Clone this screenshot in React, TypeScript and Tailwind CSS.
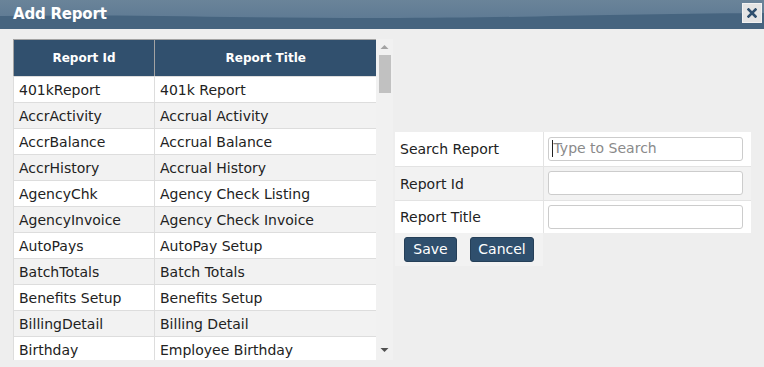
import React from "react";

const rows: [string, string][] = [
  ["401kReport", "401k Report"],
  ["AccrActivity", "Accrual Activity"],
  ["AccrBalance", "Accrual Balance"],
  ["AccrHistory", "Accrual History"],
  ["AgencyChk", "Agency Check Listing"],
  ["AgencyInvoice", "Agency Check Invoice"],
  ["AutoPays", "AutoPay Setup"],
  ["BatchTotals", "Batch Totals"],
  ["Benefits Setup", "Benefits Setup"],
  ["BillingDetail", "Billing Detail"],
  ["Birthday", "Employee Birthday"],
];

export default function App() {
  return (
    <div
      className="w-[764px] h-[367px] bg-[#eeeeee] overflow-hidden text-[#222]"
      style={{ fontFamily: '"DejaVu Sans", Verdana, sans-serif' }}
    >
      {/* Title bar */}
      <div className="relative h-[29px] bg-[#46647f] flex items-center pl-[13px] pr-[2px] overflow-hidden">
        <svg className="absolute inset-0" width="764" height="29" viewBox="0 0 764 29" preserveAspectRatio="none">
          <defs>
            <linearGradient id="tg" x1="0" y1="0" x2="0" y2="1">
              <stop offset="0" stopColor="#6a8499" />
              <stop offset="1" stopColor="#5f7b94" />
            </linearGradient>
          </defs>
          <path d="M0 0 H764 V13 C600 14 520 18 380 18 C240 18 120 14 0 16 Z" fill="url(#tg)" />
        </svg>
        <span className="relative text-white font-bold text-[15px] leading-none tracking-[-0.2px]">Add Report</span>
        <div className="relative ml-auto self-start mt-[3px] w-[20px] h-[20px] bg-[#e4e4e4] border border-[#f2f2f2] flex items-center justify-center">
          <svg width="10" height="10" viewBox="0 0 10 10">
            <path d="M1.5 1.5 L8.5 8.5 M8.5 1.5 L1.5 8.5" stroke="#2f4f6e" strokeWidth="2.6" strokeLinecap="square" />
          </svg>
        </div>
      </div>

      <div className="flex">
        {/* Left list */}
        <div className="ml-[13px] mt-[10px] flex h-[321px]">
          <div className="w-[363px] overflow-hidden">
            <table className="border-collapse w-[363px] table-fixed">
              <colgroup>
                <col className="w-[141px]" />
                <col className="w-[222px]" />
              </colgroup>
              <thead>
                <tr className="h-[37px] bg-[#31506e] text-white text-[12px] font-bold">
                  <th className="border border-[#a3a3a3] border-b-[#ddd] font-bold">Report Id</th>
                  <th className="border border-[#a3a3a3] border-b-[#ddd] border-r-0 font-bold">Report Title</th>
                </tr>
              </thead>
              <tbody>
                {rows.map(([id, title], i) => (
                  <tr key={id} className={`h-[26px] text-[14px] ${i % 2 === 0 ? "bg-white" : "bg-[#f2f2f2]"}`}>
                    <td className="border border-[#dddddd] pl-[5px] pt-[1px] whitespace-nowrap">{id}</td>
                    <td className="border border-[#dddddd] border-r-0 pl-[5px] pt-[1px] whitespace-nowrap">{title}</td>
                  </tr>
                ))}
              </tbody>
            </table>
          </div>
          {/* scrollbar */}
          <div className="w-[17px] bg-[#f1f1f1] flex flex-col items-center">
            <svg className="mt-[5px]" width="9" height="6" viewBox="0 0 9 6">
              <path d="M0.5 5 L4.5 1 L8.5 5 Z" fill="#a3a3a3" />
            </svg>
            <div className="mt-[5px] w-[12px] h-[38px] bg-[#c1c1c1]" />
            <svg className="mt-auto mb-[7px]" width="9" height="6" viewBox="0 0 9 6">
              <path d="M0.5 1 L4.5 5 L8.5 1 Z" fill="#505050" />
            </svg>
          </div>
        </div>

        {/* Right form */}
        <div className="ml-[2px] mt-[103px] w-[356px]">
          <table className="border-collapse w-[356px] table-fixed text-[14px]">
            <colgroup>
              <col className="w-[148px]" />
              <col className="w-[208px]" />
            </colgroup>
            <tbody>
              <tr className="h-[34px] bg-white">
                <td className="border-r border-b border-[#e3e3e3] pl-[5px] pt-[2px]">Search Report</td>
                <td className="border-b border-[#e3e3e3] pl-[4px]">
                  <div className="w-[195px] h-[24px] border border-[#cccccc] rounded-[3px] bg-white flex items-center pl-[3px] text-[#8a8a8a]">
                    <span className="w-px h-[17px] bg-[#222] mr-[1px]" />
                    Type to Search
                  </div>
                </td>
              </tr>
              <tr className="h-[34px] bg-[#f2f2f2]">
                <td className="border-r border-b border-[#e3e3e3] pl-[5px] pt-[2px]">Report Id</td>
                <td className="border-b border-[#e3e3e3] pl-[4px]">
                  <div className="w-[195px] h-[24px] border border-[#cccccc] rounded-[3px] bg-white" />
                </td>
              </tr>
              <tr className="h-[33px] bg-white">
                <td className="border-r border-[#e3e3e3] pl-[5px] pt-[2px]">Report Title</td>
                <td className="pl-[4px]">
                  <div className="w-[195px] h-[24px] border border-[#cccccc] rounded-[3px] bg-white" />
                </td>
              </tr>
              <tr className="h-[33px]">
                <td className="bg-[#f2f2f2] pl-[9px] align-top pt-[4px]">
                  <div className="flex gap-[13px]">
                    <button className="h-[25px] w-[53px] bg-[#2f4f6d] border border-[#253f58] rounded-[3px] text-white text-[14px]">Save</button>
                    <button className="h-[25px] w-[64px] bg-[#2f4f6d] border border-[#253f58] rounded-[3px] text-white text-[14px]">Cancel</button>
                  </div>
                </td>
                <td />
              </tr>
            </tbody>
          </table>
        </div>
      </div>
    </div>
  );
}
